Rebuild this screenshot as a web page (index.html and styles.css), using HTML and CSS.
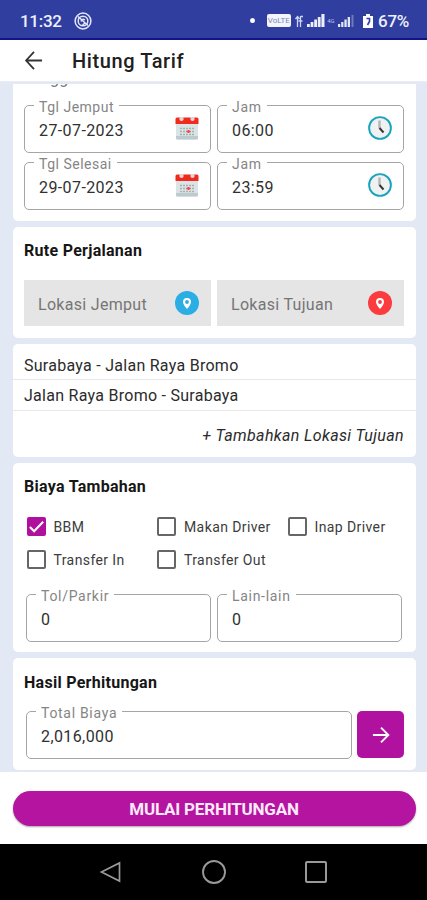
FILE: index.html
```
<!DOCTYPE html>
<html lang="id">
<head>
<meta charset="utf-8">
<title>Hitung Tarif</title>
<link rel="stylesheet" href="styles.css">
</head>
<body>
<svg class="defs" width="0" height="0" aria-hidden="true">
  <symbol id="calendar" viewBox="0 0 24 24">
    <path d="M1 8H23V22Q23 23.500 21.500 23.500H2.500Q1 23.500 1 22Z" fill="#dce3e5"/>
    <path d="M1 20H23V22Q23 23.500 21.500 23.500H2.500Q1 23.500 1 22Z" fill="#bccbd0"/>
    <path d="M.5 8V3Q.5 1.500 2 1.500H22Q23.500 1.500 23.500 3V8Z" fill="#f02a1d"/>
    <path d="M4.500 1h4v3q-2 2-4 0ZM15.500 1h4v3q-2 2-4 0Z" fill="#e2d5d6"/>
    <path d="M5 12.500H20M5 15.500H20M5 18.500H20" stroke="#a5b1b5" stroke-width="1.300" stroke-dasharray="2 1"/>
    <path d="M11.500 15.500h4M13.500 14v3" stroke="#f5483f" stroke-width="1.600"/>
  </symbol>
  <symbol id="clock" viewBox="0 0 24 24">
    <circle cx="12" cy="12" r="10.900" fill="#f0f1f2" stroke="#1ba3bd" stroke-width="1.900"/>
    <path d="M11.500 4.500V12.500" stroke="#b5b5b7" stroke-width="2.400"/>
    <path d="M11.500 12L15.500 16.500" stroke="#333" stroke-width="1.900"/>
  </symbol>
  <symbol id="pin" viewBox="0 0 24 24">
    <circle cx="12" cy="12" r="12" fill="currentColor"/>
    <path fill="#fff" fill-rule="evenodd" d="M12 7a4 4 0 0 0-4 4c0 2.800 4 7 4 7s4-4.200 4-7a4 4 0 0 0-4-4Zm0 2.100a1.900 1.900 0 1 1 0 3.800a1.900 1.900 0 0 1 0-3.800Z"/>
  </symbol>
</svg>
<div class="screen">
  <div class="status">
    <span class="time">11:32</span>
    <svg class="ring" viewBox="0 0 18 18" fill="none" stroke="#e4e7fa"><circle cx="9" cy="9" r="7.900" stroke-width="1.500"/><circle cx="9" cy="9" r="4.800" stroke-width="1.500"/><path d="M4 4.500L14 13.500M7 9.500Q8 6 11 8M8.500 13L11 11" stroke-width="1.500"/></svg>
    <span class="dot"></span>
    <span class="volte">VoLTE</span>
    <svg class="updown" viewBox="0 0 8 12" fill="none" stroke="#cdd3f5" stroke-width="1.300"><path d="M2.500 12V2M.5 4L2.500 1.500L4.500 4M5.500 12V1M3.500 6h4M5.500 1.500h2.500"/></svg>
    <svg class="signal" viewBox="0 0 18 13" fill="#eceefc"><path d="M0 10h2.800v3H0ZM3.600 8h2.800v5H3.600ZM7.200 5.500H10V13H7.200ZM10.800 3h2.800v10h-2.800ZM14.400 0H17.500v13h-3.100Z"/></svg>
    <span class="net">4G</span>
    <svg class="signal small" viewBox="0 0 16 13" fill="#e5e8fa"><path d="M0 10h2.200v3H0ZM3.200 8h2.200v5H3.200ZM6.400 5.500h2.300V13H6.400ZM9.700 3H12v10H9.700Z"/><path d="M13.500 1H15.500v12h-2Z" opacity=".35"/></svg>
    <svg class="battery" viewBox="0 0 10 14"><path d="M0 2h3V0h4v2h3v12H0Z" fill="#fff"/><path d="M3.500 4.500H6.500V7.500L4.500 11" fill="none" stroke="#303f9f" stroke-width="1.600"/></svg>
    <span class="pct">67%</span>
  </div>
  <header class="appbar">
    <svg class="back" viewBox="0 0 20 20" fill="none" stroke="#343434" stroke-width="1.900"><path d="M18.500 10H2M10 1L1.700 10L10 19"/></svg>
    <h1>Hitung Tarif</h1>
  </header>
  <main>
    <section class="card dates">
      <h2 class="clipped"><span>Tanggal</span></h2>
      <div class="row">
        <div class="field"><label class="tight">Tgl Jemput</label><span>27-07-2023</span><svg class="icon"><use href="#calendar"/></svg></div>
        <div class="field"><label>Jam</label><span>06:00</span><svg class="icon"><use href="#clock"/></svg></div>
      </div>
      <div class="row">
        <div class="field"><label class="tight">Tgl Selesai</label><span>29-07-2023</span><svg class="icon"><use href="#calendar"/></svg></div>
        <div class="field"><label>Jam</label><span>23:59</span><svg class="icon"><use href="#clock"/></svg></div>
      </div>
    </section>
    <section class="card route">
      <h2>Rute Perjalanan</h2>
      <div class="row">
        <div class="place"><span>Lokasi Jemput</span><svg class="icon blue"><use href="#pin"/></svg></div>
        <div class="place"><span>Lokasi Tujuan</span><svg class="icon red"><use href="#pin"/></svg></div>
      </div>
    </section>
    <section class="card legs">
      <p class="leg first">Surabaya - Jalan Raya Bromo</p>
      <p class="leg">Jalan Raya Bromo - Surabaya</p>
      <p class="add">+ Tambahkan Lokasi Tujuan</p>
    </section>
    <section class="card extra">
      <h2>Biaya Tambahan</h2>
      <div class="checks">
        <div class="check"><span class="box on"><svg viewBox="0 0 20 20" fill="none" stroke="#fff" stroke-width="2.200"><path d="M3 10.500L7.500 15L17 5"/></svg></span><span>BBM</span></div>
        <div class="check"><span class="box"></span><span>Makan Driver</span></div>
        <div class="check"><span class="box"></span><span>Inap Driver</span></div>
        <div class="check"><span class="box"></span><span>Transfer In</span></div>
        <div class="check"><span class="box"></span><span>Transfer Out</span></div>
      </div>
      <div class="row inset">
        <div class="field"><label>Tol/Parkir</label><span>0</span></div>
        <div class="field"><label>Lain-lain</label><span>0</span></div>
      </div>
    </section>
    <section class="card result">
      <h2>Hasil Perhitungan</h2>
      <div class="total">
        <div class="field"><label>Total Biaya</label><span>2,016,000</span></div>
        <button class="go" aria-label="Lanjut"><svg viewBox="0 0 20 20" fill="none" stroke="#fff" stroke-width="2.100"><path d="M1 10H18M10 1.800L18.200 10L10 18.200"/></svg></button>
      </div>
    </section>
  </main>
  <footer class="action"><button class="start"><span>MULAI PERHITUNGAN</span></button></footer>
  <nav class="nav">
    <svg viewBox="0 0 24 24" fill="none" stroke="#999" stroke-width="1.700"><path d="M20.500 3V21L2.500 12Z"/></svg>
    <svg viewBox="0 0 24 24" fill="none" stroke="#999" stroke-width="1.900"><circle cx="12" cy="12" r="11"/></svg>
    <svg viewBox="0 0 24 24" fill="none" stroke="#999" stroke-width="2"><rect x="2" y="2" width="20" height="20" rx="1"/></svg>
  </nav>
</div>
</body>
</html>
```
FILE: styles.css
```
* { box-sizing: border-box; }
body { margin: 0; font-family: Roboto, "Liberation Sans", sans-serif; color: #202020; background: #fff; }
h1, h2, p { margin: 0; }
button { border: 0; padding: 0; font-family: inherit; }
svg { display: block; overflow: visible; flex: none; }
.defs { position: absolute; }
.screen { width: 427px; height: 900px; display: flex; flex-direction: column; overflow: hidden; }

.status { height: 40px; background: #303f9f; border-bottom: 2px solid #14148a; display: flex; align-items: center; padding: 3px 18px 0 20px; color: #eef0fd; flex: none; }
.time { font-size: 17px; font-weight: 500; width: 42px; letter-spacing: -.3px; white-space: nowrap; }
.ring { width: 18px; height: 18px; margin-left: 12px; }
.dot { width: 5px; height: 5px; border-radius: 50%; background: #fff; margin-left: 158px; }
.volte { width: 25px; height: 13px; margin-left: 12px; border-radius: 2px; background: #f3f4fc; color: #8088b8; font-size: 8px; line-height: 13px; text-align: center; }
.updown { width: 8px; height: 12px; margin-left: 4px; }
.signal { width: 18px; height: 13px; margin-left: 4px; }
.net { width: 10px; font-size: 6px; margin-left: 2px; color: #b9c0ea; }
.signal.small { width: 16px; margin-left: 1px; }
.battery { width: 10px; height: 14px; margin-left: 9px; }
.pct { font-size: 17px; font-weight: 500; margin-left: 5px; letter-spacing: -.3px; white-space: nowrap; }

.appbar { height: 42px; display: flex; align-items: center; padding: 0 0 1px 24px; background: #fff; border-bottom: 1px solid #ececf7; flex: none; }
.back { width: 20px; height: 19px; }
h1 { font-size: 20px; font-weight: 500; margin-left: 28px; line-height: 24px; padding-top: 2px; letter-spacing: .6px; color: #202020; }

main { height: 690px; background: #e2e9f4; padding: 2px 11.500px 0 12.500px; display: flex; flex-direction: column; gap: 6px; flex: none; }
.card { background: #fff; border-radius: 5px; padding: 0 11.500px; flex: none; }
h2 { font-size: 16px; line-height: 20px; font-weight: 700; letter-spacing: .28px; color: #161616; white-space: nowrap; }
.row { display: grid; grid-template-columns: 1fr 1fr; gap: 6px; }
.field { position: relative; height: 48px; border: 1px solid #a5a5a5; border-radius: 5px; display: flex; align-items: center; justify-content: space-between; padding: 2px 11px 0 14px; font-size: 16px; letter-spacing: .4px; color: #303030; }
.field label { position: absolute; left: 9px; top: -8px; height: 18px; line-height: 18px; padding: 0 5px; background: #fff; font-size: 14px; letter-spacing: .7px; color: #858585; white-space: nowrap; }
.field .tight { letter-spacing: .5px; }
.icon { width: 24px; height: 24px; }
.field .icon { margin-top: -4px; }

.dates { height: 137px; border-radius: 0 0 5px 5px; }
.clipped { height: 3px; overflow: hidden; margin: 0 0 18px -1px; font-weight: 400; color: #777; }
.clipped span { display: block; margin-top: -15px; }
.dates .row + .row { margin-top: 9px; }

.route { height: 111px; padding-top: 14px; }
.route .row { margin-top: 19px; }
.place { height: 46px; background: #e5e5e5; display: flex; align-items: center; justify-content: space-between; padding: 0 12px 0 14px; font-size: 16px; letter-spacing: .3px; color: #757575; }
.place span { padding-top: 2px; }
.blue { color: #2aaee4; }
.red { color: #fb3b3d; }

.legs { height: 113px; padding: 0; }
.leg { height: 31px; border-bottom: 1.500px solid #e8e8e8; padding-left: 11.500px; font-size: 16px; line-height: 32px; letter-spacing: .27px; color: #2b2b2b; white-space: nowrap; }
.leg.first { height: 36px; padding-top: 6px; line-height: 31px; }
.add { text-align: right; padding: 15px 11.500px 0; font-size: 16px; line-height: 20px; font-style: italic; letter-spacing: .36px; color: #2b2b2b; }

.extra { height: 189px; padding-top: 14px; }
.checks { display: grid; grid-template-columns: 130.500px 130.500px 1fr; grid-auto-rows: 33px; margin: 13px 0 0 2.500px; }
.check { display: flex; align-items: center; gap: 8px; font-size: 14px; letter-spacing: .4px; color: #3c3c3c; white-space: nowrap; }
.box { width: 19px; height: 19px; border: 2px solid #666; border-radius: 2px; }
.box.on { border: 0; background: #b0109e; }
.box svg { width: 19px; height: 19px; }
.inset { margin: 18px 2px 0; }

.result { height: 112px; padding-top: 15px; }
.total { display: flex; gap: 5px; margin: 18px 0 0 2px; }
.total .field { flex: 1; }
.go { width: 47px; height: 47px; border-radius: 5px; background: #b0129f; display: flex; align-items: center; justify-content: center; }
.go svg { width: 18px; height: 18px; }

.action { height: 72px; background: #fff; padding: 18.500px 11.500px 0 12.500px; flex: none; }
.start { width: 100%; height: 35px; border-radius: 18px; background: #b4149f; color: #fce9f9; font-size: 17px; font-weight: 700; letter-spacing: -.2px; box-shadow: 0 1px 2px rgba(0,0,0,.35); display: flex; align-items: center; justify-content: center; padding-top: 1px; }
.nav { height: 56px; background: #000; display: grid; grid-template-columns: repeat(3, 102.500px); justify-content: center; justify-items: center; align-items: center; }
.nav svg { width: 24px; height: 24px; }
```
